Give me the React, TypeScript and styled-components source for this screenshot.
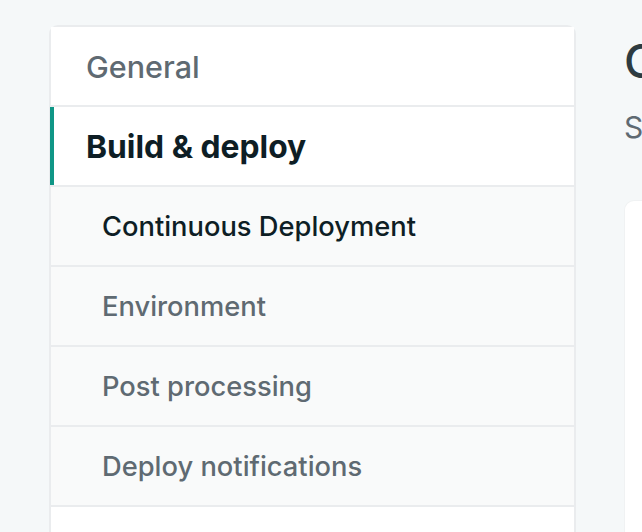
import React from "react";
import styled, { createGlobalStyle } from "styled-components";

const Global = createGlobalStyle`
  html, body { margin: 0; padding: 0; }
  body {
    background: #f5f8f9;
    font-family: Inter, "Noto Sans", sans-serif;
    overflow: hidden;
    -webkit-font-smoothing: antialiased;
  }
`;

const Page = styled.div`
  display: flex;
  align-items: flex-start;
  gap: 48px;
  padding: 25px 0 0 49px;
  width: 1600px;
`;

const Sidebar = styled.nav`
  width: 527px;
  flex: none;
  box-sizing: border-box;
  background: #ffffff;
  border: 2px solid #eaecee;
  border-radius: 9px 9px 0 0;
  display: flex;
  flex-direction: column;
`;

const Item = styled.a<{ $sub?: boolean; $active?: boolean; $current?: boolean }>`
  position: relative;
  display: flex;
  align-items: center;
  height: 78px;
  padding-left: ${(p) => (p.$sub ? "51px" : "35px")};
  border-bottom: 2px solid #eaecee;
  background: ${(p) => (p.$sub ? "#f9fafa" : "#ffffff")};
  color: ${(p) => (p.$active || p.$current ? "#0e1e25" : "#5f6a72")};
  font-size: ${(p) => (p.$sub ? "27.3px" : p.$active ? "31.8px" : "30.5px")};
  font-weight: ${(p) => (p.$active ? 700 : 500)};
  text-decoration: none;
  white-space: nowrap;

  ${(p) =>
    p.$active &&
    `
    &::before {
      content: "";
      position: absolute;
      left: -1px;
      top: 0;
      bottom: 0;
      width: 4px;
      background: #0f9686;
    }
  `}
`;

const Main = styled.main`
  display: flex;
  flex-direction: column;
  flex: none;
  width: 900px;
`;

const Title = styled.h1`
  margin: 9px 0 0 0;
  font-size: 46px;
  line-height: 54px;
  font-weight: 500;
  color: #2d3b41;
  white-space: nowrap;
`;

const Subtitle = styled.p`
  margin: 19px 0 0 0;
  font-size: 30px;
  line-height: 40px;
  color: #5f6a72;
  white-space: nowrap;
`;

const Card = styled.section`
  margin-top: 54px;
  margin-left: 1px;
  height: 400px;
  background: #ffffff;
  border-radius: 9px;
  box-shadow: 0 0 0 1px #f0f2f3;
`;

export default function App() {
  return (
    <>
      <Global />
      <Page>
        <Sidebar>
          <Item href="#">General</Item>
          <Item href="#" $active>
            Build &amp; deploy
          </Item>
          <Item href="#" $sub $current>
            Continuous Deployment
          </Item>
          <Item href="#" $sub>
            Environment
          </Item>
          <Item href="#" $sub>
            Post processing
          </Item>
          <Item href="#" $sub>
            Deploy notifications
          </Item>
          <Item href="#">Domain management</Item>
        </Sidebar>
        <Main>
          <Title>Continuous Deployment</Title>
          <Subtitle>Settings for Continuous Deployment from a Git repository</Subtitle>
          <Card />
        </Main>
      </Page>
    </>
  );
}
